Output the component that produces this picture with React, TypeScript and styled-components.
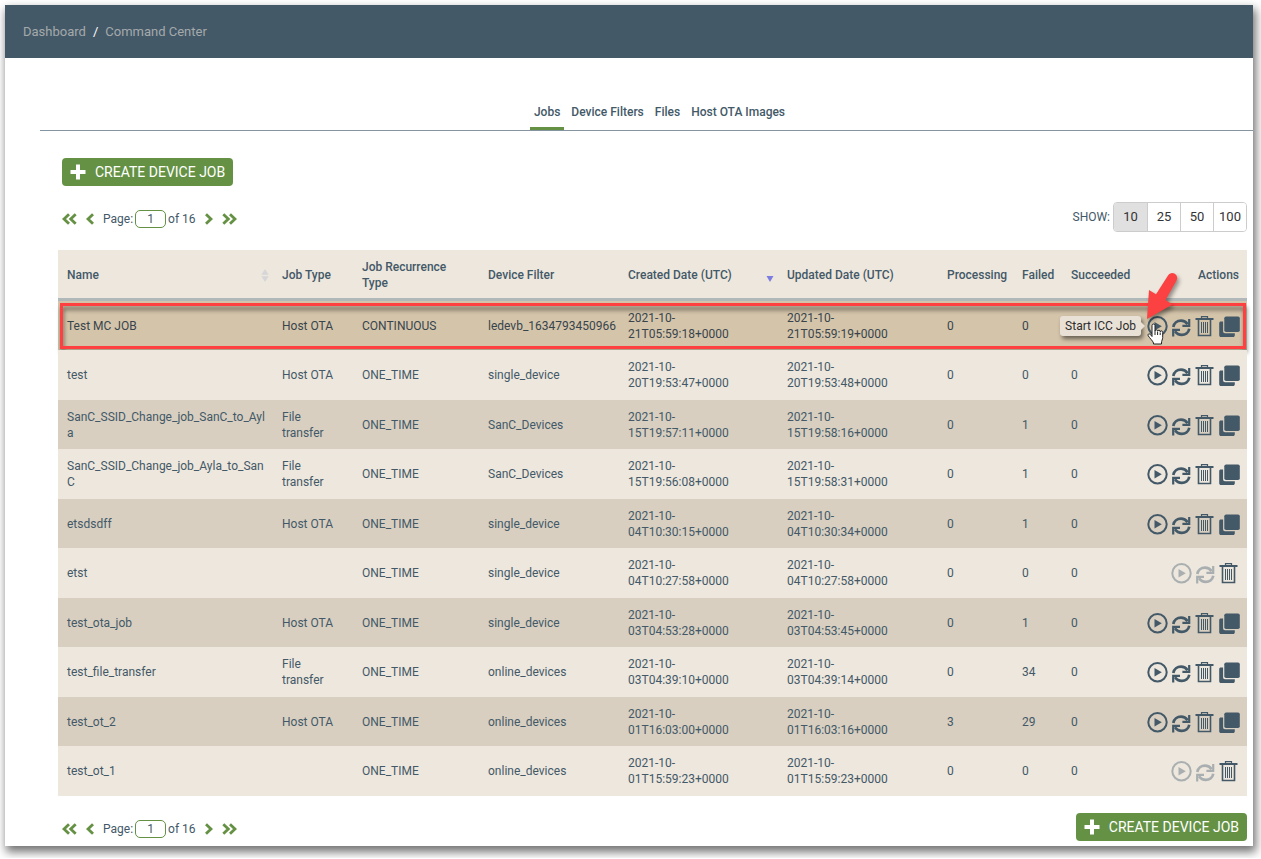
import React from "react";
import styled, { createGlobalStyle, css } from "styled-components";

const SLATE = "#435968";
const GREEN = "#659144";

const GlobalStyle = createGlobalStyle`
  * { box-sizing: border-box; }
  body {
    margin: 0;
    background: #fff;
    color: ${SLATE};
    font-family: Roboto, "Liberation Sans", sans-serif;
    font-size: 12px;
    line-height: 16px;
  }
  button, input { font: inherit; color: inherit; }
  button { cursor: pointer; }
`;

const Frame = styled.div`
  margin: 5px 8px 12px 5px;
  background: #fff;
  box-shadow: 2px 5px 9px 1px rgba(0, 0, 0, 0.55);
`;

const TopBar = styled.header`
  height: 53px;
  padding: 0 18px;
  display: flex;
  align-items: center;
  background: ${SLATE};
  font-size: 13px;
`;

const Crumbs = styled.nav`
  display: flex;
  gap: 7px;
  color: #fff;
`;

const Crumb = styled.a`
  color: #a5a9ab;
  text-decoration: none;
`;

const Main = styled.main`
  padding-left: 35px;
`;

const Tabs = styled.nav`
  display: flex;
  justify-content: center;
  align-items: flex-end;
  gap: 3px;
  height: 73px;
  padding-left: 26px;
  border-bottom: 1px solid #8495a1;
`;

const Tab = styled.a<{ $active?: boolean }>`
  padding: 0 4px 7px;
  border-bottom: 3px solid ${(p) => (p.$active ? GREEN : "transparent")};
  color: ${SLATE};
  font-weight: 500;
  text-decoration: none;
`;

const Panel = styled.section`
  padding: 27px 6px 5px 18px;
`;

const Toolbar = styled.div`
  display: flex;
  align-items: center;
  justify-content: space-between;
  padding-left: 4px;
`;

const PagingBar = styled(Toolbar)`
  padding-top: 16px;
  padding-bottom: 18px;
`;

const FooterBar = styled(Toolbar)`
  padding-top: 17px;
`;

const PrimaryButton = styled.button`
  display: flex;
  align-items: center;
  gap: 9px;
  height: 28px;
  padding: 0 8px;
  border: 0;
  border-radius: 4px;
  background: ${GREEN};
  color: #fff;
  font-size: 14px;
  text-transform: uppercase;
`;

const Pager = styled.div`
  display: flex;
  align-items: center;
  gap: 9px;
  padding-top: 4px;
`;

const PagerButton = styled.button`
  display: flex;
  padding: 0;
  border: 0;
  background: none;
  color: ${GREEN};
`;

const PageField = styled.label`
  display: flex;
  align-items: center;
  gap: 2px;
`;

const PageInput = styled.input`
  width: 31px;
  height: 18px;
  padding: 0;
  border: 1px solid ${GREEN};
  border-radius: 5px;
  background: #fff;
  text-align: center;
`;

const ShowGroup = styled.div`
  display: flex;
  align-items: center;
  gap: 3px;
`;

const Sizes = styled.div`
  display: flex;
  border: 1px solid #ccc;
  border-radius: 4px;
  overflow: hidden;
`;

const SizeButton = styled.button<{ $active?: boolean }>`
  width: 33px;
  height: 28px;
  padding: 0;
  border: 0;
  background: ${(p) => (p.$active ? "#e0e0e0" : "#fff")};
  color: #333;
  font-size: 13px;
  & + & { border-left: 1px solid #ccc; }
`;

const Table = styled.table`
  width: 100%;
  table-layout: fixed;
  border-collapse: separate;
  border-spacing: 0;
`;

const Col = styled.col<{ $w?: number }>`
  width: ${(p) => (p.$w ? `${p.$w}px` : "auto")};
`;

const Th = styled.th<{ $right?: boolean; $wrap?: boolean }>`
  height: 51px;
  padding: 2px 8px 0 9px;
  border-bottom: 3px solid #b0b8ba;
  background: #eee7dd;
  text-align: ${(p) => (p.$right ? "right" : "left")};
  font-weight: 500;
  white-space: ${(p) => (p.$wrap ? "normal" : "nowrap")};
`;

const WrapTh = styled(Th)`
  padding-right: 24px;
`;

const SortLabel = styled.div`
  display: flex;
  align-items: center;
  justify-content: space-between;
  margin-right: -4px;
`;

const Row = styled.tr<{ $hot?: boolean }>`
  position: relative;
  background: #eee7dd;
  &:nth-child(odd) { background: #d8cfc0; }
  ${(p) =>
    p.$hot &&
    css`
      &:nth-child(odd) { background: #d4c4aa; color: #38444c; }
    `}
  & > td { height: 49px; }
  &:nth-child(even) > td { height: 50px; }
`;

const Td = styled.td`
  padding: 0 9px;
`;

const NameTd = styled(Td)`
  padding-right: 6px;
  overflow-wrap: anywhere;
`;

const NoWrapTd = styled(Td)`
  white-space: nowrap;
`;

const ActionsTd = styled(Td)`
  padding: 1px 7px 0 0;
`;

const Actions = styled.div`
  position: relative;
  display: flex;
  justify-content: flex-end;
  gap: 3px;
`;

const IconButton = styled.button`
  display: flex;
  padding: 0;
  border: 0;
  background: none;
  color: ${SLATE};
  &:disabled { color: #a9afb0; cursor: default; }
`;

const Callout = styled.div`
  position: absolute;
  inset: 2px 1px 1px 2px;
  border: 3px solid #ff4040;
  filter: drop-shadow(1px 4px 2px rgba(0, 0, 0, 0.5));
  pointer-events: none;
`;

const Tooltip = styled.div`
  position: absolute;
  right: 99px;
  top: 0;
  padding: 2px 5px;
  border-radius: 3px;
  background: #eae1d6;
  color: #2c2c2c;
  white-space: nowrap;
  box-shadow: 2px 3px 4px rgba(0, 0, 0, 0.5);
  &::after {
    content: "";
    position: absolute;
    left: 100%;
    top: 6px;
    border: 4px solid transparent;
    border-left-color: #eae1d6;
    border-right-width: 0;
  }
`;

const Pointer = styled.svg`
  position: absolute;
  right: 53px;
  top: -45px;
  overflow: visible;
  pointer-events: none;
`;

const Hand = styled.svg`
  position: absolute;
  right: 76px;
  top: 7px;
  pointer-events: none;
`;

const PlusIcon = () => (
  <svg width="16" height="16" viewBox="0 0 16 16" fill="currentColor" aria-hidden="true">
    <path d="M6 .5h4V6h5.500v4H10v5.500H6V10H.5V6H6z" />
  </svg>
);

const Chevron = ({ double, flip }: { double?: boolean; flip?: boolean }) => {
  const w = double ? 15 : 8;
  return (
    <svg width={w} height="12" viewBox={`0 0 ${w} 12`} fill="none" stroke="currentColor" strokeWidth="2.8" aria-hidden="true">
      <g transform={flip ? `translate(${w} 0) scale(-1 1)` : undefined}>
        <path d="M7 1.200L2 6l5 4.800" />
        {double && <path d="M13.700 1.200L8.700 6l5 4.800" />}
      </g>
    </svg>
  );
};

const SortIcon = () => (
  <svg width="8" height="13" viewBox="0 0 8 13" fill="#d6d6d8" aria-hidden="true">
    <path d="M4 0l3.700 5.700H.3zM4 13L.3 7.200h7.400z" />
  </svg>
);

const SortedIcon = () => (
  <svg width="8" height="13" viewBox="0 0 8 13" fill="#7b7de0" aria-hidden="true">
    <path d="M.5 7h7L4 13z" />
  </svg>
);

const PlayIcon = () => (
  <svg width="21" height="21" viewBox="0 0 21 21" aria-hidden="true">
    <circle cx="10.500" cy="10.300" r="9.200" fill="none" stroke="currentColor" strokeWidth="2" />
    <path d="M7.500 6L14.800 10.300l-7.300 4.300z" fill="currentColor" />
  </svg>
);

const RefreshIcon = () => (
  <svg width="21" height="21" viewBox="0 0 21 21" fill="none" stroke="currentColor" strokeWidth="2.700" aria-hidden="true">
    <path d="M2.300 11C3 7 6.300 4.700 10 4.700c2.800 0 5 1.200 6.600 3.500" />
    <path d="M18.200 3v6.900h-6.800M2.200 20.500v-6.600H9" strokeWidth="2.200" />
    <path d="M18.300 12.800c-.8 4-4.100 6.100-7.500 6.100-2.800 0-5.200-1.200-6.800-3.600" />
  </svg>
);

const TrashIcon = () => (
  <svg width="21" height="21" viewBox="0 0 21 21" fill="none" stroke="currentColor" aria-hidden="true">
    <path d="M.5 3h18" strokeWidth="2" />
    <path d="M6.500 2.500V.6h6v1.900" strokeWidth="1.200" />
    <path d="M3.500 4v15.500h12V4" strokeWidth="1.600" />
    <path d="M6.500 6v11M8.500 6v11M10.500 6v11M12.500 6v11" strokeWidth="1" />
  </svg>
);

const CopyIcon = () => (
  <svg width="21" height="21" viewBox="0 0 21 21" fill="currentColor" aria-hidden="true">
    <rect x="5.300" y=".5" width="15.500" height="15.500" rx="1.800" />
    <path d="M1.800 5.500h2.300v9.700c0 1.200.7 2 1.900 2h9.800v2c0 1-.8 1.800-1.700 1.800H2c-1 0-1.800-.8-1.800-1.800V7.200c0-1 .7-1.700 1.600-1.700z" />
  </svg>
);

type Job = {
  name: string;
  type: string;
  recurrence: string;
  filter: string;
  created: string;
  updated: string;
  processing: number;
  failed: number;
  succeeded: number | null;
  idle?: boolean;
  hot?: boolean;
};

const job = (
  name: string, type: string, recurrence: string, filter: string, created: string, updated: string,
  processing: number, failed: number, succeeded: number | null = 0, extra: Partial<Job> = {},
): Job => ({ name, type, recurrence, filter, created, updated, processing, failed, succeeded, ...extra });

const jobs: Job[] = [
  job("Test MC JOB", "Host OTA", "CONTINUOUS", "ledevb_1634793450966", "21T05:59:18", "21T05:59:19", 0, 0, null, { hot: true }),
  job("test", "Host OTA", "ONE_TIME", "single_device", "20T19:53:47", "20T19:53:48", 0, 0),
  job("SanC_SSID_Change_job_SanC_to_Ayla", "File transfer", "ONE_TIME", "SanC_Devices", "15T19:57:11", "15T19:58:16", 0, 1),
  job("SanC_SSID_Change_job_Ayla_to_SanC", "File transfer", "ONE_TIME", "SanC_Devices", "15T19:56:08", "15T19:58:31", 0, 1),
  job("etsdsdff", "Host OTA", "ONE_TIME", "single_device", "04T10:30:15", "04T10:30:34", 0, 1),
  job("etst", "", "ONE_TIME", "single_device", "04T10:27:58", "04T10:27:58", 0, 0, 0, { idle: true }),
  job("test_ota_job", "Host OTA", "ONE_TIME", "single_device", "03T04:53:28", "03T04:53:45", 0, 1),
  job("test_file_transfer", "File transfer", "ONE_TIME", "online_devices", "03T04:39:10", "03T04:39:14", 0, 34),
  job("test_ot_2", "Host OTA", "ONE_TIME", "online_devices", "01T16:03:00", "01T16:03:16", 3, 29),
  job("test_ot_1", "", "ONE_TIME", "online_devices", "01T15:59:23", "01T15:59:23", 0, 0, 0, { idle: true }),
];

const Stamp = ({ value }: { value: string }) => (
  <NoWrapTd>
    2021-10-<br />{value}+0000
  </NoWrapTd>
);

const CreateButton = () => (
  <PrimaryButton type="button"><PlusIcon />Create Device Job</PrimaryButton>
);

const Paging = () => (
  <Pager>
    <PagerButton type="button" aria-label="First page"><Chevron double /></PagerButton>
    <PagerButton type="button" aria-label="Previous page"><Chevron /></PagerButton>
    <PageField>Page:<PageInput defaultValue="1" />of 16</PageField>
    <PagerButton type="button" aria-label="Next page"><Chevron flip /></PagerButton>
    <PagerButton type="button" aria-label="Last page"><Chevron double flip /></PagerButton>
  </Pager>
);

const JobActions = ({ item }: { item: Job }) => (
  <Actions>
    <IconButton type="button" aria-label="Start" disabled={item.idle}><PlayIcon /></IconButton>
    <IconButton type="button" aria-label="Restart" disabled={item.idle}><RefreshIcon /></IconButton>
    <IconButton type="button" aria-label="Delete"><TrashIcon /></IconButton>
    {!item.idle && <IconButton type="button" aria-label="Copy"><CopyIcon /></IconButton>}
    {item.hot && (
      <>
        <Tooltip role="tooltip">Start ICC Job</Tooltip>
        <Pointer width="40" height="52" viewBox="0 0 40 52" aria-hidden="true">
          <path
            d="M0 48L2 19l7 4.200L21 4.500a4.900 4.900 0 0 1 8.500 5L18.500 29l7 4.500z"
            fill="#fb4141"
            style={{ filter: "drop-shadow(2px 3px 2px rgba(0,0,0,.4))" }}
          />
        </Pointer>
        <Hand width="17" height="22" viewBox="0 0 17 22" aria-hidden="true">
          <path
            d="M5 13.500V2.500a1.500 1.500 0 0 1 3 0V8a1.300 1.300 0 0 1 2.600.3 1.300 1.300 0 0 1 2.600.5 1.300 1.300 0 0 1 2.500.8v4.900c0 2-1.200 3-1.200 5.500v1H6.500v-1C5.500 17.500 3 15.500 1.200 12.800c-.8-1.500.8-2.600 2-1.500z"
            fill="#fff"
            stroke="#222"
          />
          <path d="M8 8v4M10.600 9v3M13.200 9.500V12" stroke="#222" fill="none" />
        </Hand>
      </>
    )}
  </Actions>
);

export default function App() {
  return (
    <>
      <GlobalStyle />
      <Frame>
        <TopBar>
          <Crumbs aria-label="Breadcrumb">
            <Crumb href="#dashboard">Dashboard</Crumb>
            <span>/</span>
            <Crumb href="#command-center">Command Center</Crumb>
          </Crumbs>
        </TopBar>
        <Main>
          <Tabs>
            <Tab href="#jobs" $active>Jobs</Tab>
            <Tab href="#filters">Device Filters</Tab>
            <Tab href="#files">Files</Tab>
            <Tab href="#images">Host OTA Images</Tab>
          </Tabs>
          <Panel>
            <Toolbar><CreateButton /></Toolbar>
            <PagingBar>
              <Paging />
              <ShowGroup>
                SHOW:
                <Sizes>
                  <SizeButton type="button" $active>10</SizeButton>
                  <SizeButton type="button">25</SizeButton>
                  <SizeButton type="button">50</SizeButton>
                  <SizeButton type="button">100</SizeButton>
                </Sizes>
              </ShowGroup>
            </PagingBar>
            <Table>
              <colgroup>
                <Col />
                <Col $w={80} />
                <Col $w={126} />
                <Col $w={140} />
                <Col $w={159} />
                <Col $w={160} />
                <Col $w={75} />
                <Col $w={49} />
                <Col $w={75} />
                <Col $w={110} />
              </colgroup>
              <thead>
                <tr>
                  <Th><SortLabel>Name<SortIcon /></SortLabel></Th>
                  <Th>Job Type</Th>
                  <WrapTh $wrap>Job Recurrence Type</WrapTh>
                  <Th>Device Filter</Th>
                  <Th><SortLabel>Created Date (UTC)<SortedIcon /></SortLabel></Th>
                  <Th>Updated Date (UTC)</Th>
                  <Th>Processing</Th>
                  <Th>Failed</Th>
                  <Th>Succeeded</Th>
                  <Th $right>Actions</Th>
                </tr>
              </thead>
              <tbody>
                {jobs.map((item) => (
                  <Row key={item.name} $hot={item.hot}>
                    <NameTd>{item.name}</NameTd>
                    <Td>{item.type}</Td>
                    <Td>{item.recurrence}</Td>
                    <NoWrapTd>{item.filter}</NoWrapTd>
                    <Stamp value={item.created} />
                    <Stamp value={item.updated} />
                    <Td>{item.processing}</Td>
                    <Td>{item.failed}</Td>
                    <Td>{item.succeeded}</Td>
                    <ActionsTd>
                      {item.hot && <Callout />}
                      <JobActions item={item} />
                    </ActionsTd>
                  </Row>
                ))}
              </tbody>
            </Table>
            <FooterBar>
              <Paging />
              <CreateButton />
            </FooterBar>
          </Panel>
        </Main>
      </Frame>
    </>
  );
}
